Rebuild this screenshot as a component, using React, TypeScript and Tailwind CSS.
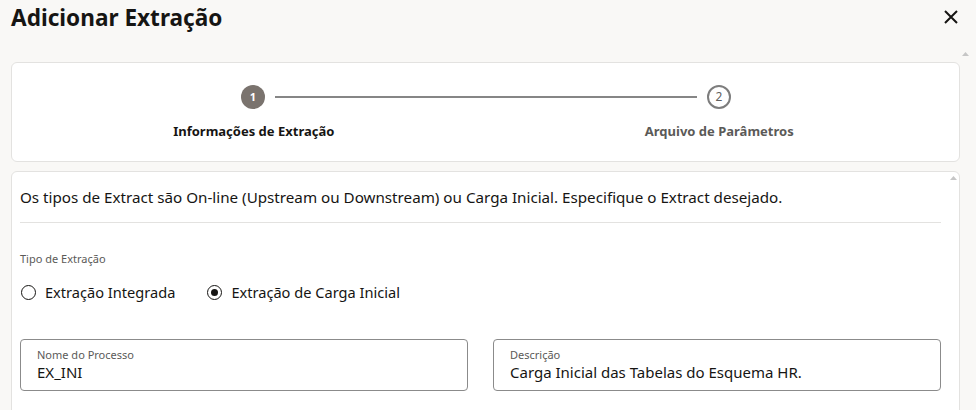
import React from "react";

const font = { fontFamily: '"Noto Sans", "Open Sans", sans-serif' };

function ScrollUp({ className }: { className: string }) {
  return (
    <svg className={className} width="7" height="4" viewBox="0 0 7 4">
      <polygon points="0,4 3.5,0 7,4" fill="#c6c6c6" />
    </svg>
  );
}

export default function App() {
  return (
    <div
      className="relative w-[976px] h-[410px] overflow-hidden bg-[#f9f8f6] text-[#161513]"
      style={font}
    >
      <ScrollUp className="absolute left-[962px] top-[52px]" />
      <div className="flex items-center justify-between pl-[11px] pr-[18px] h-[36px]">
        <h1 className="text-[22.6px] font-bold leading-none">Adicionar Extração</h1>
        <svg width="14" height="14" viewBox="0 0 14 14" className="mt-[-2px]">
          <path d="M1 1 L13 13 M13 1 L1 13" stroke="#161513" strokeWidth="2" />
        </svg>
      </div>

      <div className="ml-[11px] mt-[26px] w-[949px] h-[100px] bg-white border border-[#e3e2e0] rounded-[6px]">
        <div className="flex items-center pl-[229px] pr-[228px] pt-[22px]">
          <div className="w-[24px] h-[24px] rounded-full bg-[#7a736e] text-white text-[11px] font-bold flex items-center justify-center">
            1
          </div>
          <div className="flex-1 h-[2px] bg-[#868686] mx-[10px]" />
          <div className="w-[24px] h-[24px] rounded-full border-2 border-[#7d7d7d] text-[#5f5f5f] text-[12px] flex items-center justify-center">
            2
          </div>
        </div>
        <div className="grid grid-cols-2 mt-[13px]">
          <div className="text-center text-[13px] font-bold text-[#161513] pl-[10px]">Informações de Extração</div>
          <div className="text-center text-[13px] font-bold text-[#5b5a58] pr-[6px]">Arquivo de Parâmetros</div>
        </div>
      </div>

      <div className="relative ml-[11px] mt-[9px] w-[949px] h-[260px] bg-white border border-[#e3e2e0] rounded-t-[6px] pl-[8px] pr-[18px]">
        <ScrollUp className="absolute right-[2px] top-[4px]" />
        <div className="h-[51px] flex items-center text-[15.2px] border-b border-[#e3e2e0]">
          Os tipos de Extract são On-line (Upstream ou Downstream) ou Carga Inicial. Especifique o Extract desejado.
        </div>
        <div className="mt-[30px] text-[11px] text-[#5b5a58] leading-none">Tipo de Extração</div>
        <div className="flex items-center mt-[18px] text-[14.6px]">
          <label className="flex items-center">
            <span className="w-[15px] h-[15px] rounded-full border-[1.5px] border-[#161513] ml-[1px]" />
            <span className="ml-[9px]">Extração Integrada</span>
          </label>
          <label className="flex items-center ml-[32px]">
            <span className="w-[15px] h-[15px] rounded-full border-[1.5px] border-[#161513] flex items-center justify-center">
              <span className="w-[7px] h-[7px] rounded-full bg-[#161513]" />
            </span>
            <span className="ml-[9px]">Extração de Carga Inicial</span>
          </label>
        </div>
        <div className="grid grid-cols-2 gap-[25px] mt-[35px]">
          <div className="h-[52px] border border-[#8b8b8b] rounded-[4px] pl-[16px] pt-[8px]">
            <div className="text-[11px] text-[#5b5a58] leading-[14px]">Nome do Processo</div>
            <div className="text-[15px] leading-[20px]">EX_INI</div>
          </div>
          <div className="h-[52px] border border-[#8b8b8b] rounded-[4px] pl-[16px] pt-[8px]">
            <div className="text-[11px] text-[#5b5a58] leading-[14px]">Descrição</div>
            <div className="text-[15px] leading-[20px]">Carga Inicial das Tabelas do Esquema HR.</div>
          </div>
        </div>
      </div>
    </div>
  );
}
